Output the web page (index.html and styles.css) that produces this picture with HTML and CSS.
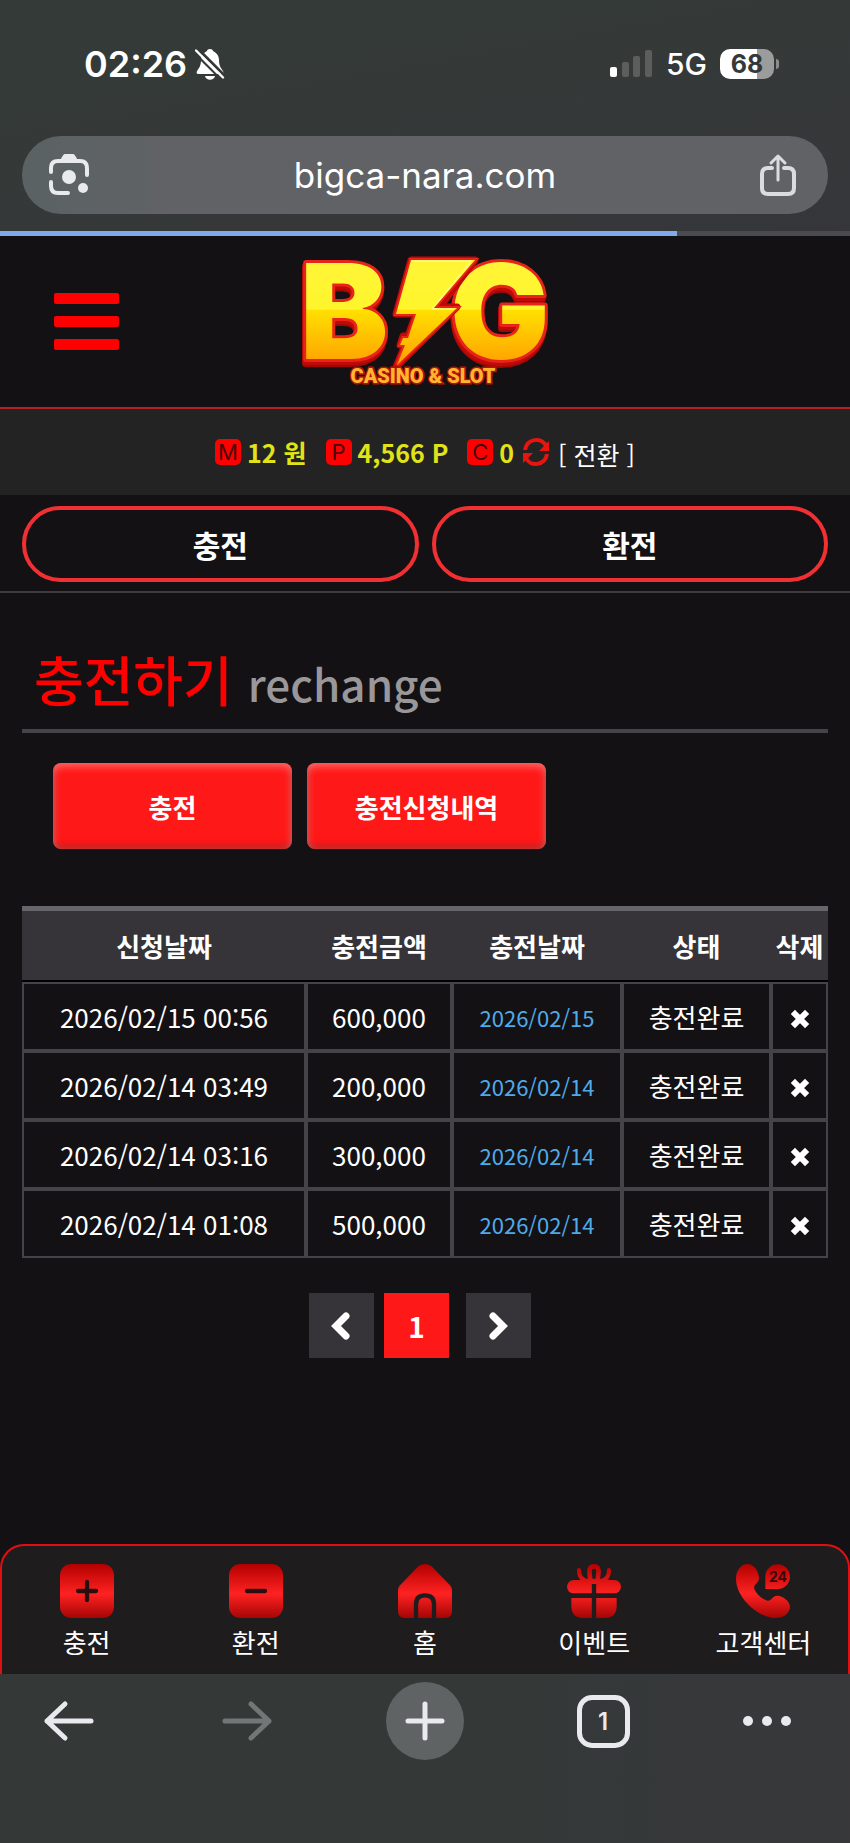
FILE: index.html
```html
<!DOCTYPE html>
<html lang="ko">
<head>
    <meta charset="UTF-8">
    <meta name="viewport" content="width=device-width, initial-scale=1.0">
    <title>BIG CASINO &amp; SLOT</title>
    <link rel="stylesheet" href="styles.css">
</head>
<body>
    <div class="browser-top">
        <div class="status-bar">
            <div class="status-left">
                <span class="clock">02:26</span>
                <svg class="bell" viewBox="0 0 30 32" aria-hidden="true">
                    <path d="M15 1c2 0 3 1 3 2 4 2 6 5 6 9 0 6 2 8 4 11 1 2 0 3-1 3H3c-1 0-2-1-1-3 2-3 4-5 4-11 0-4 2-7 6-9 0-1 1-2 3-2z" fill="#fff"/>
                    <path d="M10 28h10c-1 5-9 5-10 0z" fill="#fff"/>
                    <path d="M3 1l27 27" stroke="#353938" stroke-width="3"/>
                    <path d="M1 2.500l27 27" stroke="#fff" stroke-width="2.400" stroke-linecap="round"/>
                    <path d="M-1 4.500l27 27" stroke="#353938" stroke-width="2"/>
                </svg>
            </div>
            <div class="status-right">
                <svg class="signal" viewBox="0 0 43 28" aria-hidden="true">
                    <rect x="0" y="17" width="7" height="10" rx="2" fill="#fff"/>
                    <rect x="12" y="12" width="7" height="15" rx="2" fill="#5b5e5d"/>
                    <rect x="23" y="6" width="7" height="21" rx="2" fill="#5b5e5d"/>
                    <rect x="35" y="0" width="7" height="27" rx="2" fill="#5b5e5d"/>
                </svg>
                <span class="network">5G</span>
                <span class="battery">68</span>
            </div>
        </div>
        <div class="address-bar">
            <button class="icon-btn" type="button" aria-label="Lens">
                <svg width="42" height="42" viewBox="0 0 42 42" fill="none" stroke="#e8eaed" stroke-width="4" stroke-linecap="round" stroke-linejoin="round">
                    <path d="M3 18v-4q0-7 7-7h22q7 0 7 7v7M3 28v4q0 7 7 7h10"/>
                    <path d="M15 5l2-3h8l2 3z" fill="#e8eaed"/>
                    <circle cx="21" cy="23" r="7" fill="#e8eaed" stroke="none"/>
                    <circle cx="35" cy="34" r="5" fill="#e8eaed" stroke="none"/>
                </svg>
            </button>
            <input class="url" type="text" value="bigca-nara.com" aria-label="Address">
            <button class="icon-btn" type="button" aria-label="Share">
                <svg width="36" height="42" viewBox="0 0 36 42" fill="none" stroke="#dcdce0" stroke-width="4" stroke-linecap="round" stroke-linejoin="round">
                    <path d="M12 14H8q-6 0-6 6v14q0 6 6 6h20q6 0 6-6V20q0-6-6-6h-4"/>
                    <path d="M18 26V3M11 9l7-7 7 7" stroke-width="3"/>
                </svg>
            </button>
        </div>
        <div class="progress"><div class="progress-fill" style="width: 79.6%"></div></div>
    </div>

    <header class="header">
        <button class="menu-btn" type="button" aria-label="메뉴">
            <span></span>
            <span></span>
            <span></span>
        </button>
        <a class="logo" href="#">
            <svg width="256" height="160" viewBox="16 0 256 160" role="img" aria-label="BIG CASINO &amp; SLOT">
                <defs>
                    <linearGradient id="gold" gradientUnits="userSpaceOnUse" x1="0" y1="24" x2="0" y2="118">
                        <stop offset="0" stop-color="#fff536"/>
                        <stop offset="0.460" stop-color="#fff52c"/>
                        <stop offset="0.470" stop-color="#ffe000"/>
                        <stop offset="1" stop-color="#ffa600"/>
                    </linearGradient>
                </defs>
                <g class="logo-letters">
                    <text x="19" y="117">B</text>
                    <text x="169" y="117">G</text>
                </g>
                <path d="M130 18h64l-35 47h17l-61 60 9-22h-5l3-9h5l8-22h-20z" fill="#c00a08" stroke="#c00a08" stroke-width="7" stroke-linejoin="round"/>
                <path d="M130 18h64l-41 48h23l-60 57 8-20h-5l3-7h5l8-24h-20z" fill="url(#gold)" stroke="#e8231a" stroke-width="4" paint-order="stroke"/>
                <path d="M131 19h59l-39 48h22" fill="none" stroke="#fff9a8" stroke-width="1"/>
                <text class="logo-sub" x="142" y="141">CASINO &amp; SLOT</text>
            </svg>
        </a>
    </header>

    <div class="balance">
        <span class="badge">M</span><strong>12 원</strong>
        <span class="badge next">P</span><strong>4,566 P</strong>
        <span class="badge next">C</span><strong>0</strong>
        <button class="refresh" type="button" aria-label="새로고침">
            <svg width="28" height="28" viewBox="0 0 28 28">
                <path d="M3 12C5 0 20-1 24 8M25 16C23 28 8 29 4 20" fill="none" stroke="#e8150f" stroke-width="4"/>
                <path d="M27 3v10H17zM1 25V15h10z" fill="#e8150f"/>
            </svg>
        </button>
        <a class="convert" href="#">[ 전환 ]</a>
    </div>

    <div class="quick">
        <a class="pill" href="#">충전</a>
        <a class="pill" href="#">환전</a>
    </div>

    <main class="content">
        <h1 class="title">충전하기 <span>rechange</span></h1>
        <div class="tabs">
            <button class="tab" type="button">충전</button>
            <button class="tab" type="button">충전신청내역</button>
        </div>

        <table class="history">
            <thead>
                <tr>
                    <th>신청날짜</th>
                    <th class="col-amount">충전금액</th>
                    <th class="col-date">충전날짜</th>
                    <th class="col-state">상태</th>
                    <th class="col-del">삭제</th>
                </tr>
            </thead>
            <tbody>
                <tr>
                    <td>2026/02/15 00:56</td>
                    <td>600,000</td>
                    <td class="date">2026/02/15</td>
                    <td>충전완료</td>
                    <td><button class="del" type="button" aria-label="삭제"><svg width="18" height="18" viewBox="0 0 18 18"><path d="M4 4l10 10M14 4L4 14"/></svg></button></td>
                </tr>
                <tr>
                    <td>2026/02/14 03:49</td>
                    <td>200,000</td>
                    <td class="date">2026/02/14</td>
                    <td>충전완료</td>
                    <td><button class="del" type="button" aria-label="삭제"><svg width="18" height="18" viewBox="0 0 18 18"><path d="M4 4l10 10M14 4L4 14"/></svg></button></td>
                </tr>
                <tr>
                    <td>2026/02/14 03:16</td>
                    <td>300,000</td>
                    <td class="date">2026/02/14</td>
                    <td>충전완료</td>
                    <td><button class="del" type="button" aria-label="삭제"><svg width="18" height="18" viewBox="0 0 18 18"><path d="M4 4l10 10M14 4L4 14"/></svg></button></td>
                </tr>
                <tr>
                    <td>2026/02/14 01:08</td>
                    <td>500,000</td>
                    <td class="date">2026/02/14</td>
                    <td>충전완료</td>
                    <td><button class="del" type="button" aria-label="삭제"><svg width="18" height="18" viewBox="0 0 18 18"><path d="M4 4l10 10M14 4L4 14"/></svg></button></td>
                </tr>
            </tbody>
        </table>

        <nav class="pager" aria-label="페이지">
            <a href="#" aria-label="이전"><svg width="20" height="28" viewBox="0 0 20 28"><path d="M14 4L4 14l10 10"/></svg></a>
            <a class="active" href="#">1</a>
            <a class="next-page" href="#" aria-label="다음"><svg width="20" height="28" viewBox="0 0 20 28"><path d="M4 4l10 10L4 24"/></svg></a>
        </nav>
    </main>

    <nav class="bottom-nav">
        <a href="#">
            <svg viewBox="0 0 162 162">
                <defs>
                    <linearGradient id="red" gradientUnits="userSpaceOnUse" x1="0" y1="0" x2="0" y2="162">
                        <stop offset="0" stop-color="#b30000"/>
                        <stop offset="0.550" stop-color="#ff2222"/>
                        <stop offset="1" stop-color="#a50505"/>
                    </linearGradient>
                </defs>
                <rect width="162" height="162" rx="34" fill="url(#red)"/>
                <path class="cut" d="M81 54v54M54 81h54"/>
            </svg>
            충전
        </a>
        <a href="#">
            <svg viewBox="0 0 162 162">
                <rect width="162" height="162" rx="34" fill="url(#red)"/>
                <path class="cut" d="M54 81h54"/>
            </svg>
            환전
        </a>
        <a href="#">
            <svg viewBox="0 0 162 162">
                <path d="M62 6q19-12 38 0l56 58q6 7 6 16v62q0 20-20 20H20q-20 0-20-20V80q0-9 6-16z" fill="url(#red)"/>
                <path class="cut flat" d="M54 164v-43q0-27 27-27t27 27v43"/>
            </svg>
            홈
        </a>
        <a href="#">
            <svg viewBox="0 0 162 162">
                <path d="M36 18q0 30 28 34M126 18q0 30-28 34" fill="none" stroke="url(#red)" stroke-width="12" stroke-linecap="round"/>
                <path d="M81 7c-22 0-11 28-11 44h22c0-16 11-44-11-44z" fill="none" stroke="url(#red)" stroke-width="14"/>
                <rect y="48" width="162" height="40" rx="20" fill="url(#red)"/>
                <path d="M13 102h136v24q0 36-36 36H49q-36 0-36-36z" fill="url(#red)"/>
                <path class="cut flat" d="M81 60v102"/>
            </svg>
            이벤트
        </a>
        <a href="#">
            <svg viewBox="0 0 162 162">
                <path d="M0 45C0 18 16 0 35 0c18 0 34 22 34 42 0 17-18 19-14 32 5 16 27 34 41 36 9 1 14-15 28-15 16 0 38 16 38 33 0 20-20 34-44 34C66 162 0 100 0 45z" fill="url(#red)"/>
                <path d="M88 75V37a37 37 0 1 1 37 38z" fill="url(#red)"/>
                <text x="126" y="53">24</text>
            </svg>
            고객센터
        </a>
    </nav>

    <div class="browser-bottom">
        <button class="icon-btn" type="button" aria-label="Back">
            <svg width="50" height="42" viewBox="0 0 50 42"><path d="M47 21H3M21 4L3 21l18 17"/></svg>
        </button>
        <button class="icon-btn disabled" type="button" aria-label="Forward">
            <svg width="50" height="42" viewBox="0 0 50 42"><path d="M3 21h44M29 4l18 17-18 17"/></svg>
        </button>
        <button class="icon-btn new-tab" type="button" aria-label="New tab">
            <svg width="42" height="42" viewBox="0 0 42 42"><path d="M21 4v34M4 21h34"/></svg>
        </button>
        <button class="icon-btn" type="button" aria-label="Tabs"><span class="tab-count">1</span></button>
        <button class="icon-btn more" type="button" aria-label="More">
            <svg width="50" height="12" viewBox="0 0 50 12"><g fill="#e8eaed"><circle cx="6" cy="6" r="5"/><circle cx="25" cy="6" r="5"/><circle cx="44" cy="6" r="5"/></g></svg>
        </button>
    </div>
</body>
</html>
```
FILE: styles.css
```css
* {
    box-sizing: border-box;
}

body {
    margin: 0;
    min-height: 100vh;
    display: flex;
    flex-direction: column;
    background: #131114;
    color: #fff;
    font-family: "Noto Sans CJK KR", "Noto Sans CJK SC", sans-serif;
    font-size: 26px;
}

a {
    color: inherit;
    text-decoration: none;
}

button {
    padding: 0;
    border: 0;
    background: none;
    color: inherit;
    font: inherit;
    cursor: pointer;
}

svg {
    display: block;
    overflow: visible;
}

.browser-top {
    background: linear-gradient(170deg, #343a38 30%, #36363a);
    font-family: Inter, sans-serif;
}

.status-bar {
    display: flex;
    justify-content: space-between;
    align-items: center;
    height: 136px;
    padding: 0 70px 8px 84px;
}

.status-left,
.status-right {
    display: flex;
    align-items: center;
}

.status-left {
    gap: 8px;
}

.status-right {
    gap: 13px;
}

.clock {
    font-size: 36px;
    font-weight: 600;
}

.bell {
    width: 30px;
    height: 32px;
    overflow: hidden;
}

.signal {
    width: 43px;
    height: 28px;
}

.network {
    font-size: 30px;
    font-weight: 500;
}

.battery {
    position: relative;
    width: 54px;
    margin-right: 6px;
    border-radius: 10px;
    background: linear-gradient(90deg, #fff 68%, #9b9d9c 68%);
    color: #353938;
    font-size: 25px;
    font-weight: 700;
    line-height: 30px;
    text-align: center;
}

.battery::after {
    content: "";
    position: absolute;
    top: 10px;
    right: -5px;
    width: 3px;
    height: 10px;
    border-radius: 0 3px 3px 0;
    background: #8b8d8c;
}

.address-bar {
    display: flex;
    align-items: center;
    height: 78px;
    margin: 0 22px 17px;
    padding: 0 32px 0 26px;
    border-radius: 39px;
    background: linear-gradient(90deg, #5b6263, #616266 20%);
}

.url {
    flex: 1;
    min-width: 0;
    border: 0;
    background: none;
    color: #fff;
    font-family: Inter, sans-serif;
    font-size: 35px;
    text-align: center;
}

.progress {
    height: 5px;
    background: #4a4b4f;
}

.progress-fill {
    height: 100%;
    background: #7faaeb;
}

.header {
    display: grid;
    grid-template-columns: 1fr auto 1fr;
    align-items: center;
    height: 173px;
    padding: 0 54px;
    border-bottom: 2px solid #b52226;
}

.menu-btn {
    display: flex;
    flex-direction: column;
    gap: 12px;
    width: 65px;
}

.menu-btn span {
    height: 11px;
    border-radius: 2px;
    background: #f00;
}

.logo text {
    font-family: Inter, sans-serif;
    font-size: 132px;
    font-weight: 900;
}

.logo-letters {
    fill: url(#gold);
    stroke: #e8231a;
    stroke-width: 6px;
    stroke-linejoin: round;
    paint-order: stroke;
    filter: drop-shadow(-1px 3px 0 #c00a08) drop-shadow(0 2px 0 #a00806);
}

.logo .logo-sub {
    fill: #ffb62e;
    stroke: #b31208;
    stroke-width: 3px;
    paint-order: stroke;
    font-family: Roboto, sans-serif;
    font-size: 20px;
    text-anchor: middle;
}

.balance {
    display: flex;
    justify-content: center;
    align-items: center;
    height: 86px;
    background: #232323;
    color: #e1e319;
    font-size: 25px;
}

.badge {
    width: 26px;
    margin-right: 6px;
    border-radius: 5px;
    background: #f00;
    color: #4b0608;
    font-family: Inter, sans-serif;
    font-size: 22px;
    line-height: 26px;
    text-align: center;
}

.badge.next {
    margin-left: 19px;
}

.refresh {
    margin: 0 8px;
}

.convert {
    padding-top: 4px;
    color: #fff;
}

.quick {
    display: grid;
    grid-template-columns: 1fr 1fr;
    gap: 13px;
    padding: 11px 22px 9px;
    border-bottom: 2px solid #3c3c3e;
}

.pill {
    border: 4px solid #f03032;
    border-radius: 38px;
    font-size: 30px;
    font-weight: 700;
    line-height: 68px;
    text-align: center;
}

.content {
    flex: 1;
    padding: 44px 22px 0;
}

.title {
    margin: 0;
    padding: 0 12px 4px;
    border-bottom: 4px solid #444347;
    color: #f00;
    font-size: 54px;
    font-weight: 500;
    line-height: 84px;
}

.title span {
    color: #999799;
    font-size: 44px;
}

.tabs {
    display: flex;
    gap: 15px;
    margin: 30px 31px 57px;
}

.tab {
    width: 239px;
    height: 86px;
    border-radius: 8px;
    background: #ff1818;
    box-shadow: inset 0 3px 8px rgba(255, 255, 255, 0.4), inset 0 -3px 6px rgba(120, 30, 30, 0.6);
    font-size: 26px;
    font-weight: 700;
}

.history {
    width: 100%;
    border-collapse: separate;
    border-spacing: 0;
    table-layout: fixed;
    text-align: center;
}

.history th {
    height: 76px;
    padding: 0;
    border-top: 5px solid #666569;
    border-bottom: 2px solid #000;
    background: #363438;
    white-space: nowrap;
}

.history td {
    height: 69px;
    padding: 0;
    border: 2px solid #444347;
}

.col-amount {
    width: 146px;
}

.col-date {
    width: 170px;
}

.col-state {
    width: 149px;
}

.col-del {
    width: 57px;
}

.history .date {
    color: #4fabe8;
    font-size: 22px;
}

.del {
    display: block;
    margin: 4px auto 0;
}

.del path,
.pager path {
    fill: none;
    stroke: #fff;
    stroke-width: 6px;
    stroke-linecap: square;
}

.pager path {
    stroke-width: 7px;
    stroke-linecap: round;
}

.pager {
    display: flex;
    justify-content: center;
    gap: 10px;
    padding: 35px 10px 0 0;
}

.pager a {
    display: flex;
    justify-content: center;
    align-items: center;
    width: 65px;
    height: 65px;
    background: #363438;
    font-size: 28px;
    font-weight: 700;
}

.pager .active {
    background: #ff1818;
}

.pager .next-page {
    margin-left: 7px;
}

.bottom-nav {
    display: grid;
    grid-template-columns: repeat(5, 1fr);
    height: 130px;
    padding-top: 18px;
    border: 2px solid #e01012;
    border-bottom: 0;
    border-radius: 24px 24px 0 0;
    background: #1f1c1e;
    line-height: 48px;
    text-align: center;
}

.bottom-nav svg {
    width: 54px;
    height: 54px;
    margin: 0 auto;
}

.bottom-nav .cut {
    fill: none;
    stroke: #2a0d0e;
    stroke-width: 13px;
    stroke-linecap: round;
}

.bottom-nav .flat {
    stroke: #1f1c1e;
    stroke-linecap: butt;
}

.bottom-nav text {
    fill: #3a0809;
    font-family: Inter, sans-serif;
    font-size: 42px;
    font-weight: 700;
    text-anchor: middle;
}

.browser-bottom {
    display: flex;
    justify-content: space-between;
    align-items: flex-start;
    height: 169px;
    padding: 8px 30px 0;
    background: linear-gradient(90deg, #343938 60%, #38383a);
    font-family: Inter, sans-serif;
}

.browser-bottom .icon-btn {
    display: flex;
    justify-content: center;
    align-items: center;
    width: 78px;
    height: 78px;
}

.browser-bottom .more {
    justify-content: flex-start;
}

.browser-bottom path {
    fill: none;
    stroke: #e8eaed;
    stroke-width: 5px;
    stroke-linecap: round;
    stroke-linejoin: round;
}

.browser-bottom .disabled path {
    stroke: #727676;
}

.new-tab {
    border-radius: 50%;
    background: #5f6363;
}

.tab-count {
    width: 53px;
    border: 5px solid #e8eaed;
    border-radius: 15px;
    color: #e8eaed;
    font-size: 24px;
    font-weight: 600;
    line-height: 43px;
}
```
